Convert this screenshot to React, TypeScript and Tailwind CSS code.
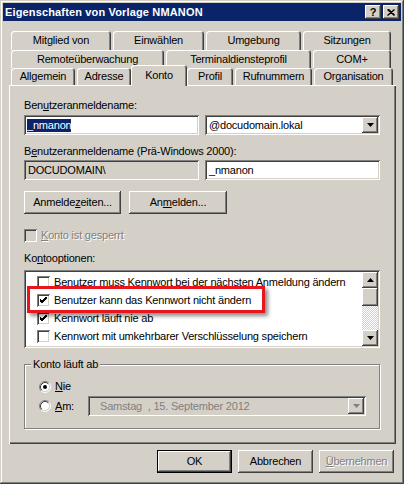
import React from 'react';

const raised =
	'shadow-[inset_-1px_-1px_0_#404040,inset_1px_1px_0_#ffffff,inset_-2px_-2px_0_#808080,inset_2px_2px_0_#d4d0c8]';
const sunken =
	'shadow-[inset_1px_1px_0_#808080,inset_-1px_-1px_0_#ffffff,inset_2px_2px_0_#404040,inset_-2px_-2px_0_#d4d0c8]';
const tab =
	'flex items-center justify-center rounded-t-[3px] bg-[#d4d0c8] shadow-[inset_1px_1px_0_#ffffff,inset_-1px_0_0_#404040,inset_-2px_0_0_#808080]';

function Check({ checked, disabled }: { checked?: boolean; disabled?: boolean }) {
	return (
		<div
			className={`flex h-[13px] w-[13px] shrink-0 items-center justify-center ${sunken} ${
				disabled ? 'bg-[#d4d0c8]' : 'bg-white'
			}`}
		>
			{checked && (
				<svg width="7" height="7" viewBox="0 0 7 7">
					<path d="M0 2 L2 4 L7 -1 M0 3 L2 5 L7 0 M0 4 L2 6 L7 1" stroke="#000" strokeWidth="1" fill="none" />
				</svg>
			)}
		</div>
	);
}

function Radio({ checked }: { checked?: boolean }) {
	return (
		<svg width="12" height="12" viewBox="0 0 12 12" className="shrink-0">
			<circle cx="6" cy="6" r="4.5" fill="#fff" />
			<path d="M2.11 9.89 A5.5 5.5 0 0 1 9.89 2.11" stroke="#808080" fill="none" />
			<path d="M9.89 2.11 A5.5 5.5 0 0 1 2.11 9.89" stroke="#fff" fill="none" />
			<path d="M2.82 9.18 A4.5 4.5 0 0 1 9.18 2.82" stroke="#404040" fill="none" />
			<path d="M9.18 2.82 A4.5 4.5 0 0 1 2.82 9.18" stroke="#d4d0c8" fill="none" />
			{checked && <circle cx="6" cy="6" r="2" fill="#000" />}
		</svg>
	);
}

function Arrow({ up, color = '#000' }: { up?: boolean; color?: string }) {
	return (
		<svg width="7" height="4" viewBox="0 0 7 4">
			<polygon points={up ? '0,4 7,4 3.5,0' : '0,0 7,0 3.5,4'} fill={color} />
		</svg>
	);
}

const options = [
	{ text: 'Benutzer muss Kennwort bei der nächsten Anmeldung ändern', checked: false },
	{ text: 'Benutzer kann das Kennwort nicht ändern', checked: true },
	{ text: 'Kennwort läuft nie ab', checked: true },
	{ text: 'Kennwort mit umkehrbarer Verschlüsselung speichern', checked: false },
];

export default function App() {
	return (
		<div
			className={`h-[484px] w-[404px] bg-[#d4d0c8] font-['Liberation_Sans',Arial,sans-serif] text-[11px] leading-[13px] tracking-[-0.2px] text-black shadow-[inset_-1px_-1px_0_#404040,inset_1px_1px_0_#d4d0c8,inset_-2px_-2px_0_#808080,inset_2px_2px_0_#ffffff] pt-[3px]`}
		>
			{/* title bar */}
			<div className="mx-[3px] flex h-[18px] items-center justify-between bg-[#0a246a] pl-[2px] pr-[2px]">
				<span className="text-[11px] font-bold tracking-[0.15px] text-white">Eigenschaften von Vorlage NMANON</span>
				<div className="flex gap-[2px]">
					<div className={`flex h-[14px] w-[16px] items-center justify-center bg-[#d4d0c8] text-[11px] font-bold leading-none ${raised}`}>
						?
					</div>
					<div className={`flex h-[14px] w-[16px] items-center justify-center bg-[#d4d0c8] ${raised}`}>
						<svg width="8" height="7" viewBox="0 0 8 7">
							<path d="M0.5 0.5 L7.5 6.5 M7.5 0.5 L0.5 6.5 M1.5 0.5 L7.5 6" stroke="#000" strokeWidth="1.4" fill="none" />
						</svg>
					</div>
				</div>
			</div>

			{/* tabs */}
			<div className="pt-[10px]">
				<div className="flex h-[19px] pl-[11px]">
					<div className={`${tab} w-[100px]`}>Mitglied von</div>
					<div className={`${tab} ml-[2px] w-[91px]`}>Einwählen</div>
					<div className={`${tab} ml-[2px] w-[95px]`}>Umgebung</div>
					<div className={`${tab} ml-[2px] w-[88px]`}>Sitzungen</div>
				</div>
				<div className="flex h-[18px] pl-[11px]">
					<div className={`${tab} w-[153px]`}>Remoteüberwachung</div>
					<div className={`${tab} ml-[2px] w-[145px]`}>Terminaldiensteprofil</div>
					<div className={`${tab} ml-[2px] w-[78px]`}>COM+</div>
				</div>
				<div className="relative z-10 -mb-px flex h-[18px] items-start pl-[11px]">
					<div className={`${tab} h-[17px] w-[64px]`}>Allgemein</div>
					<div className={`${tab} ml-[2px] h-[17px] w-[54px]`}>Adresse</div>
					<div className={`${tab} -mt-[3px] h-[21px] w-[56px] pb-[1px]`}>Konto</div>
					<div className={`${tab} h-[17px] w-[46px]`}>Profil</div>
					<div className={`${tab} ml-[2px] h-[17px] w-[77px]`}>Rufnummern</div>
					<div className={`${tab} ml-[2px] h-[17px] w-[79px]`}>Organisation</div>
				</div>

				{/* panel */}
				<div className="ml-[9px] flex h-[359px] w-[387px] flex-col pl-[15px] pt-[14px] shadow-[inset_1px_1px_0_#ffffff,inset_-1px_-1px_0_#404040,inset_-2px_-2px_0_#808080]">
					<div>
						Ben<u>u</u>tzeranmeldename:
					</div>
					<div className="mt-[3px] flex gap-[6px]">
						<div className={`flex h-[20px] w-[175px] items-center bg-white pl-[3px] ${sunken}`}>
							<span className="bg-[#0a246a] text-white">_nmanon</span>
						</div>
						<div className={`flex h-[20px] w-[175px] items-center bg-white p-[2px] ${sunken}`}>
							<span className="flex-1 pl-[2px]">@docudomain.lokal</span>
							<div className={`flex h-[16px] w-[16px] items-center justify-center bg-[#d4d0c8] ${raised}`}>
								<Arrow />
							</div>
						</div>
					</div>

					<div className="mt-[10px]">
						B<u>e</u>nutzeranmeldename (Prä-Windows 2000):
					</div>
					<div className="mt-[2px] flex gap-[6px]">
						<div className={`flex h-[20px] w-[175px] items-center bg-[#d4d0c8] pl-[4px] ${sunken}`}>DOCUDOMAIN\</div>
						<div className={`flex h-[20px] w-[175px] items-center bg-white pl-[4px] ${sunken}`}>_nmanon</div>
					</div>

					<div className="mt-[11px] flex gap-[8px]">
						<div className={`flex h-[23px] w-[97px] items-center justify-center ${raised}`}>
							<span>
								Anmelde<u>z</u>eiten...
							</span>
						</div>
						<div className={`flex h-[23px] w-[98px] items-center justify-center ${raised}`}>
							<span>
								An<u>m</u>elden...
							</span>
						</div>
					</div>

					<div className="mt-[15px] flex h-[13px] items-center gap-[4px] text-[#808080] [text-shadow:1px_1px_0_#ffffff]">
						<Check disabled />
						<span>
							<u>K</u>onto ist gesperrt
						</span>
					</div>

					<div className="mt-[10px]">
						Ko<u>n</u>tooptionen:
					</div>
					<div className={`relative mt-[5px] flex h-[78px] w-[356px] bg-white p-[2px] ${sunken}`}>
						<div className="flex-1 pt-[1px]">
							{options.map((o) => (
								<div key={o.text} className="flex h-[18px] items-center pl-[11px]">
									<Check checked={o.checked} />
									<span className="ml-[4px] whitespace-nowrap">{o.text}</span>
								</div>
							))}
						</div>
						<div className="flex w-[16px] flex-col">
							<div className={`flex h-[16px] items-center justify-center bg-[#d4d0c8] ${raised}`}>
								<Arrow up />
							</div>
							<div className={`h-[18px] bg-[#d4d0c8] ${raised}`} />
							<div className="flex-1 bg-[repeating-conic-gradient(#d4d0c8_0%_25%,#ffffff_0%_50%)] bg-[length:2px_2px]" />
							<div className={`flex h-[16px] items-center justify-center bg-[#d4d0c8] ${raised}`}>
								<Arrow />
							</div>
						</div>
						<div className="absolute left-[3px] top-[16px] h-[27px] w-[238px] border-[3px] border-[#e8161c] shadow-[3px_3px_4px_rgba(0,0,0,0.45)]" />
					</div>

					<div className="relative mt-[16px] h-[65px] w-[356px] border border-[#808080] pl-[14px] pt-[15px] shadow-[inset_1px_1px_0_#ffffff,1px_1px_0_#ffffff]">
						<span className="absolute -top-[7px] left-[6px] bg-[#d4d0c8] px-[2px]">Konto läuft ab</span>
						<div className="flex h-[13px] items-center">
							<Radio checked />
							<span className="ml-[4px]">
								<u>N</u>ie
							</span>
						</div>
						<div className="mt-[3px] flex h-[20px] items-center">
							<Radio />
							<span className="ml-[4px] w-[33px]">
								<u>A</u>m:
							</span>
							<div className={`flex h-[20px] w-[278px] items-center bg-[#d4d0c8] p-[2px] ${sunken}`}>
								<span className="flex-1 pl-[10px] text-[#808080]">Samstag&nbsp;&nbsp;, 15. September 2012</span>
								<div className={`flex h-[16px] w-[16px] items-center justify-center bg-[#d4d0c8] ${raised}`}>
									<Arrow color="#808080" />
								</div>
							</div>
						</div>
					</div>
				</div>
			</div>

			{/* dialog buttons */}
			<div className="mt-[6px] flex justify-end gap-[6px] pr-[10px]">
				<div className="h-[23px] w-[75px] border border-black">
					<div className={`flex h-full items-center justify-center ${raised}`}>OK</div>
				</div>
				<div className={`flex h-[23px] w-[75px] items-center justify-center ${raised}`}>Abbrechen</div>
				<div className={`flex h-[23px] w-[75px] items-center justify-center text-[#808080] [text-shadow:1px_1px_0_#ffffff] ${raised}`}>
					<span>
						<u>Ü</u>bernehmen
					</span>
				</div>
			</div>
		</div>
	);
}
